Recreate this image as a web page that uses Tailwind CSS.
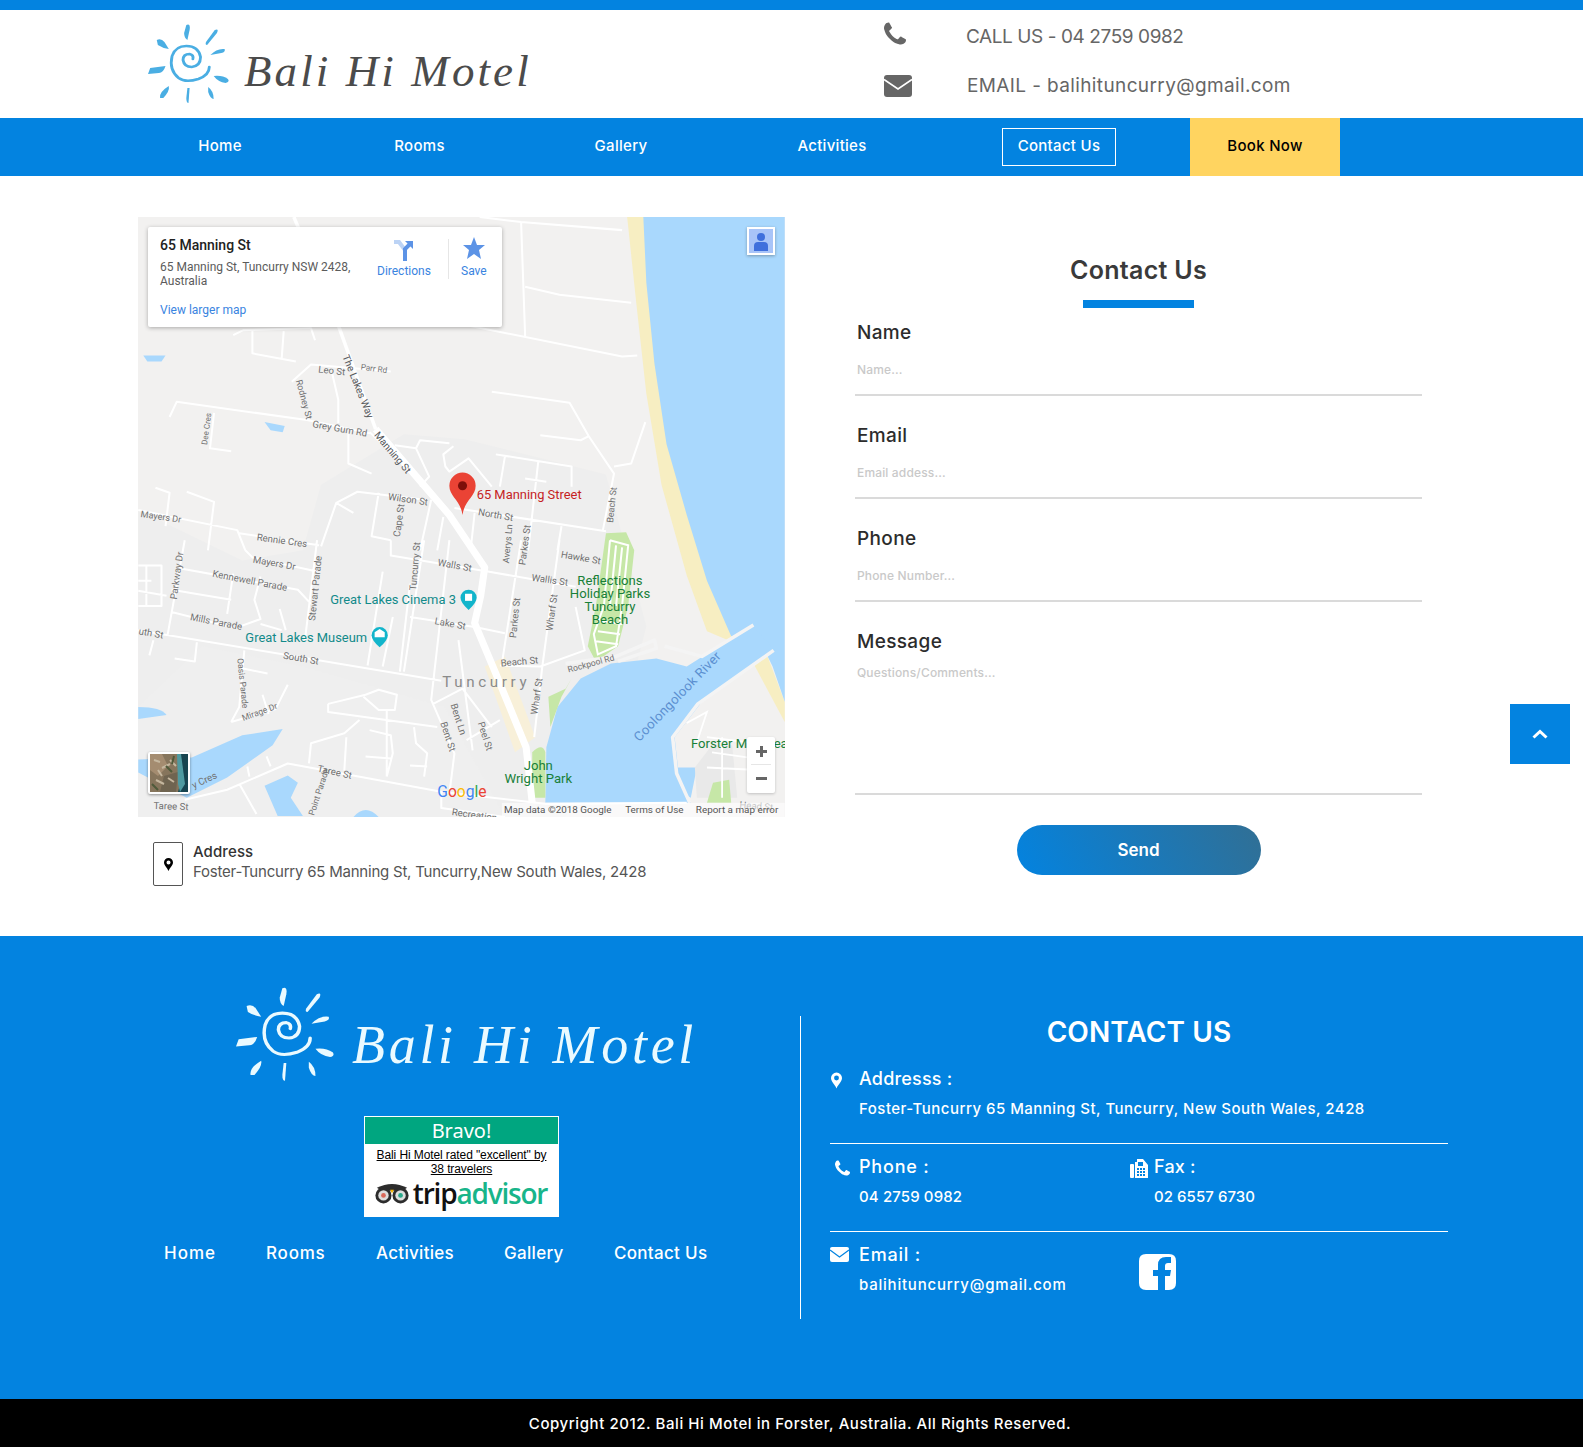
<!DOCTYPE html>
<html lang="en">
<head>
  <meta charset="UTF-8">
  <meta name="viewport" content="width=device-width, initial-scale=1.0">
  <title>Contact Us - Bali Hi Motel</title>
  <script src="https://cdn.jsdelivr.net/npm/@tailwindcss/browser@4"></script>
</head>
<body class="font-['Inter',sans-serif] bg-white text-[#333]">
<div class="relative w-[1583px] h-[1447px] overflow-hidden">

  <!-- top strip + header -->
  <div class="h-[10px] bg-[#0383e0]"></div>
  <header class="flex h-[108px]">
    <div class="w-[884px] pl-[148px] pt-[14px] flex">
      <svg width="81" height="80" viewBox="0 0 74 80" preserveAspectRatio="none" fill="#4aaee3">
        <path d="M35 1 q4 -2 3 5 l-2 10 q-3 -2 -3 -7 z"/>
        <path d="M61 6 q4 -2 2 3 l-9 12 q-2 0 -1 -3 z"/>
        <path d="M8 16 q4 -2 7 2 l4 7 q-6 -1 -10 -4 z"/>
        <path d="M57 31 q6 -7 13 -6 q1 3 -3 4 z"/>
        <path d="M0 50 l2 -6 l14 -2 q-2 7 -6 7 z"/>
        <path d="M60 52 q8 -1 13 3 q2 3 -2 4 q-7 -1 -11 -7 z"/>
        <path d="M11 74 q-1 -6 8 -12 q1 5 -5 12 z"/>
        <path d="M36 64 l2 0 l-1 15 q-2 0 -2 -5 z"/>
        <path d="M55 63 q5 4 5 12 q-3 0 -5 -7 z"/>
        <path d="M56 43 q0 8 -10 12 q-12 4 -18 -1 q-9 -8 -6 -22 q3 -10 13 -10 q11 0 13 11 q0 9 -8 10 q-7 0 -8 -7 q0 -6 6 -6 q4 1 3 5" fill="none" stroke="#4aaee3" stroke-width="2.6" stroke-linecap="round"/>
      </svg>
      <span class="font-['Liberation_Serif',serif] italic text-[45px] leading-none text-[#4b4b4b] tracking-[3.1px] ml-[15px] mt-[25px]">Bali Hi Motel</span>
    </div>
    <div class="pt-px text-[#666] text-[19px]">
      <div class="flex items-center h-[50px]">
        <div class="w-[82px] -mt-[6px]">
          <svg width="22" height="23" viewBox="0 0 1408 1408" fill="#666"><path d="M1408 1112q0 27-10 70.5t-21 68.5q-21 50-122 106-94 51-186 51-27 0-53-3.5t-57.5-12.5-47-14.5-55.5-20.5-49-18q-98-35-175-83-127-79-264-216t-216-264q-48-77-83-175-3-9-18-49t-20.5-55.5-14.5-47-12.5-57.5-3.5-53q0-92 51-186 56-101 106-122 25-11 68.5-21t70.5-10q14 0 21 3 18 6 53 76 11 19 30 54t35 63.5 31 53.5q3 4 17.5 25t21.5 35.5 7 28.5q0 20-28.5 50t-62 55-62 53-28.5 46q0 9 5 22.5t8.5 20.5 14 24 11.5 19q76 137 174 235t235 174q2 1 19 11.5t24 14 20.5 8.5 22.5 5q18 0 46-28.5t53-62 55-62 50-28.5q14 0 28.5 7t35.5 21.5 25 17.5q25 15 53.5 31t63.5 35 54 30q70 35 76 53 3 7 3 21z"/></svg>
        </div>
        <span class="mt-[3px] tracking-[-0.42px]">CALL US - 04 2759 0982</span>
      </div>
      <div class="flex items-center h-[50px]">
        <div class="w-[83px]">
          <svg width="28" height="22" viewBox="0 0 28 22"><rect width="28" height="22" rx="3" fill="#666"/><path d="M0 4.5 L14 14 L28 4.5" fill="none" stroke="#fff" stroke-width="1.6"/></svg>
        </div>
        <span class="tracking-[0.38px]">EMAIL - balihituncurry@gmail.com</span>
      </div>
    </div>
  </header>

  <!-- nav -->
  <nav class="h-[58px] bg-[#0383e0] pl-[120px] flex items-center text-white text-[15px] font-medium tracking-[0.3px]">
    <a class="w-[200px] text-center -mt-[2px]">Home</a>
    <a class="w-[199px] text-center -mt-[2px]">Rooms</a>
    <a class="w-[204px] text-center -mt-[2px]">Gallery</a>
    <a class="w-[218px] text-center -mt-[2px]">Activities</a>
    <div class="w-[236px] flex justify-center -mt-[1px]">
      <a class="w-[114px] h-[38px] border border-white flex items-center justify-center">Contact Us</a>
    </div>
    <a class="ml-[13px] w-[150px] h-[58px] bg-[#ffd460] text-black flex items-center justify-center pb-[1px]">Book Now</a>
  </nav>

  <!-- main -->
  <main class="h-[760px] flex">
    <div class="pl-[138px] pt-[41px] w-[855px]">
      <div class="relative w-[647px] h-[600px] overflow-hidden bg-[#f2f1f0]">
        <svg class="font-['Roboto',sans-serif]" width="647" height="600" viewBox="137 215 640 594">
          <!-- land tone -->
          <path d="M137 505 L240 555 L300 545 L318 480 L400 430 L460 435 L600 470 L640 620 L620 700 L560 809 L137 809 Z" fill="#eeeeee"/>
          <path d="M137 700 L200 640 L300 660 L440 700 L500 809 L137 809 Z" fill="#efefef"/>
          <!-- sand -->
          <path d="M621 215 L640 215 L648 330 L664 440 L690 540 L735 640 L700 625 L680 570 L655 480 L640 390 L630 300 Z" fill="#f7eec2"/>
          <path d="M745 655 L760 650 L777 695 L777 715 Z" fill="#f7eec2"/>
          <!-- water -->
          <path d="M637 215 L777 215 L777 695 L765 660 L748 625 L724 630 L700 575 L680 510 L660 440 L648 360 L640 280 Z" fill="#a9d8fd"/>
          <path d="M540 795 L541 740 L552 700 L575 672 L605 657 L650 652 L680 660 L745 619 L767 644 L695 695 L668 730 L672 766 L684 795 Z" fill="#a9d8fd"/>
          <path d="M670 760 L690 760 L684 790 L675 785 Z" fill="#a9d8fd"/>
          <path d="M142 352 L164 352 L160 358 L146 358 Z" fill="#a9d8fd"/>
          <path d="M262 418 L282 422 L280 428 L268 426 Z" fill="#a9d8fd"/>
          <path d="M137 700 Q160 700 165 708 L137 712 Z" fill="#a9d8fd"/>
          <path d="M137 752 L190 750 L240 728 L280 722 L270 738 L225 770 L185 790 L137 765 Z" fill="#a9d8fd"/>
          <path d="M262 778 L285 768 L295 775 L288 790 L300 808 L275 808 Z" fill="#a9d8fd"/>
          <path d="M350 809 Q362 795 375 809 Z" fill="#a9d8fd"/>
          <!-- parks -->
          <path d="M600 528 L620 527 L628 545 L622 600 L612 640 L590 655 L582 640 L590 600 Z" fill="#c6e7a7"/>
          <path d="M543 690 L560 682 L566 672 L556 690 L545 720 Z" fill="#c6e7a7"/>
          <path d="M527 745 Q537 735 540 745 L540 790 L527 790 Z" fill="#c6e7a7"/>
          <path d="M688 760 L705 738 L725 738 L730 790 L690 790 Z" fill="#e9e9e9"/>
          <path d="M706 775 L722 772 L724 795 L700 795 Z" fill="#c6e7a7"/>
          <path d="M480 660 L510 745 L530 730 L500 650 Z" fill="#f8f0d9"/>
          <!-- minor roads -->
          <path fill="none" stroke="#fff" stroke-width="2" stroke-linejoin="round"
            d="M475 215 L516 220 L616 228 M516 220 L520 333 M520 284 L554 292 L625 300 M466 323 L616 353 L631 352
            M487 388 L564 399 L583 432 L608 469 L597 525 M535 431 L575 436 L583 432 M608 462 L625 459 L639 418
            M168 413 L175 398 L304 416 L366 429 M289 378 L308 361 L387 368 M329 370 L335 396 L335 419
            M250 327 L250 350 L293 358 M281 328 L279 355 M231 332 L241 327 L308 325 L312 337
            M212 409 L208 444 L229 447 M345 429 L345 459 L368 469 M366 428 L412 469
            M391 441 L412 444 L425 472 L416 482 M412 444 L416 436 L445 439 M449 442 L439 450 L441 462 L445 467 L464 454 L487 482
            M491 450 L566 462 L566 482 M500 452 L495 482 M533 457 L523 545 M520 474 L541 477
            M318 541 L333 498 L354 487 L420 495 M333 498 L350 508 M375 488 L368 531 L387 535 M427 495 L416 545
            M450 503 L600 526 M439 512 L433 545 M470 508 L466 545 M556 521 L552 545
            M137 505 L235 525 L243 545 M154 483 L168 488 L164 521 M185 487 L212 497 L206 545 M237 528 L316 540
            M243 545 L250 552 L314 566 M314 535 L302 634 M179 563 L295 584 L308 598 M183 535 L166 629
            M387 535 L387 550 L483 566 L570 581 M170 584 L229 594 M231 568 L225 608
            M170 606 L233 622 L258 613 L252 594 L258 571 M258 618 L279 624 M277 603 L283 624
            M137 624 L437 674 M195 636 L193 655 L173 652 M152 634 L148 649 M242 644 L237 700 L229 715 M241 662 L265 667
            M229 715 L273 702 L285 678 M260 688 L266 707 M379 566 L364 659 M389 611 L379 660 M406 578 L396 665
            M420 535 L400 665 M445 535 L427 693 L450 746 L445 786 M406 611 L470 621 M475 622 L500 627
            M429 697 L458 682 L487 720 M495 659 L535 660 L579 644 L570 601 M516 535 L497 657 M554 535 L537 660 L529 730
            M183 792 L225 782 L285 756 L437 784 L540 796 L680 795 M245 759 L247 769 M264 749 L268 759 M237 776 L254 806
            M306 756 L308 736 L341 726 L356 713 M343 730 L341 763 M325 697 L362 688 L375 683 L393 688 L391 703 L375 703 L360 690
            M325 697 L325 705 L433 720 M383 703 L383 769 M366 723 L387 728 L389 746 L383 769 M362 749 L387 751
            M410 720 L412 736 L423 746 L420 769 M406 758 L423 759 M454 634 L468 743 M462 733 L495 713 M437 784 L437 800 L500 809
            M137 560 L160 560 L160 600 L137 600 M150 575 L137 575 M145 560 L145 600 M137 585 L165 590"/>
          <!-- breakwaters and forster streets -->
          <path fill="none" stroke="#f4f4f4" stroke-width="3.5" stroke-linejoin="round" d="M560 657 L610 650 L648 634 L650 642 L612 655 M658 640 L695 650 L746 619 M766 644 L691 697 L666 730 L670 766 L683 795"/>
          <path fill="none" stroke="#fff" stroke-width="1.8" d="M680 716 L700 705 L690 735 M700 730 L740 735 M705 745 L740 750 M700 760 L740 762 M715 730 L715 790"/>
          <!-- caravan park stripes -->
          <path fill="none" stroke="#fff" stroke-width="2" d="M604 535 L622 540 L616 600 L610 640 L592 648 L588 628 L598 600 L604 535 M610 540 L604 600 M616 542 L610 600 M592 625 L614 628 M590 635 L612 638 M594 615 L616 618"/>
          <!-- main road -->
          <path fill="none" stroke="#fff" stroke-width="3.5" d="M291 215 L306 250 M335 322 L372 425"/>
          <path fill="none" stroke="#fff" stroke-width="7" stroke-linejoin="round" d="M372 425 L445 510 L480 562 L476 590 L470 617 L491 667 L521 740 L527 795"/>

          <!-- labels -->
          <g fill="#707070" font-size="9.5">
            <text x="315" y="369" transform="rotate(6 315 369)">Leo St</text>
            <text x="357" y="366" font-size="8" transform="rotate(8 357 366)">Parr Rd</text>
            <text x="293" y="377" font-size="9" transform="rotate(75 293 377)">Rodney St</text>
            <text x="205" y="441" font-size="8" transform="rotate(-82 205 441)">Dee Cres</text>
            <text x="309" y="423" transform="rotate(10 309 423)">Grey Gum Rd</text>
            <text x="384" y="495" transform="rotate(8 384 495)">Wilson St</text>
            <text x="473" y="510" transform="rotate(10 473 510)">North St</text>
            <text x="139" y="512" font-size="9" transform="rotate(8 139 512)">Mayers Dr</text>
            <text x="254" y="535" font-size="9.5" transform="rotate(8 254 535)">Rennie Cres</text>
            <text x="250" y="557" transform="rotate(10 250 557)">Mayers Dr</text>
            <text x="210" y="571" transform="rotate(11 210 571)">Kennewell Parade</text>
            <text x="175" y="594" transform="rotate(-82 175 594)">Parkway Dr</text>
            <text x="188" y="614" transform="rotate(11 188 614)">Mills Parade</text>
            <text x="137" y="628" transform="rotate(10 137 628)">uth St</text>
            <text x="280" y="652" transform="rotate(10 280 652)">South St</text>
            <text x="312" y="615" transform="rotate(-84 312 615)">Stewart Parade</text>
            <text x="396" y="532" transform="rotate(-82 396 532)">Cape St</text>
            <text x="412" y="585" transform="rotate(-85 412 585)">Tuncurry St</text>
            <text x="433" y="560" transform="rotate(10 433 560)">Walls St</text>
            <text x="526" y="575" transform="rotate(8 526 575)">Wallis St</text>
            <text x="430" y="618" transform="rotate(10 430 618)">Lake St</text>
            <text x="504" y="558" font-size="9" transform="rotate(-85 504 558)">Averys Ln</text>
            <text x="520" y="560" transform="rotate(-82 520 560)">Parkes St</text>
            <text x="555" y="552" transform="rotate(10 555 552)">Hawke St</text>
            <text x="511" y="632" transform="rotate(-84 511 632)">Parkes St</text>
            <text x="547" y="625" transform="rotate(-82 547 625)">Wharf St</text>
            <text x="496" y="660" transform="rotate(-5 496 660)">Beach St</text>
            <text x="563" y="666" font-size="8.5" transform="rotate(-15 563 666)">Rockpool Rd</text>
            <text x="607" y="518" font-size="9" transform="rotate(-84 607 518)">Beach St</text>
            <text x="532" y="708" transform="rotate(-82 532 708)">Wharf St</text>
            <text x="235" y="652" font-size="8.5" transform="rotate(84 235 652)">Oasis Parade</text>
            <text x="241" y="714" font-size="8.5" transform="rotate(-20 241 714)">Mirage Dr</text>
            <text x="446" y="698" transform="rotate(72 446 698)">Bent Ln</text>
            <text x="436" y="716" transform="rotate(72 436 716)">Bent St</text>
            <text x="473" y="716" transform="rotate(72 473 716)">Peel St</text>
            <text x="314" y="764" transform="rotate(12 314 764)">Taree St</text>
            <text x="152" y="801" transform="rotate(2 152 801)">Taree St</text>
            <text x="192" y="781" transform="rotate(-25 192 781)">y Cres</text>
            <text x="311" y="808" font-size="8.5" transform="rotate(-72 311 808)">Point Parade</text>
            <text x="447" y="807" transform="rotate(8 447 807)">Recreation</text>
            <text x="732" y="800" transform="rotate(5 732 800)">Head St</text>
          </g>
          <g fill="#55585c" font-size="10">
            <text x="339" y="353" transform="rotate(68 339 353)">The Lakes Way</text>
            <text x="370" y="431" transform="rotate(50 370 431)">Manning St</text>
          </g>
          <text x="438" y="680" font-size="15" fill="#8a8a8a" letter-spacing="3.6">Tuncurry</text>
          <text x="472" y="494" font-size="12.800" fill="#c5221f">65 Manning Street</text>
          <g fill="#128a8a" font-size="12.800">
            <text x="327" y="598">Great Lakes Cinema 3</text>
            <text x="243" y="636">Great Lakes Museum</text>
          </g>
          <path d="M464 604 q-8 -7 -8 -12 a8 8 0 1 1 16 0 q0 5 -8 12 z" fill="#12b5cb"/>
          <rect x="460.500" y="588" width="7" height="7" fill="#fff"/>
          <path d="M376 641 q-8 -7 -8 -12 a8 8 0 1 1 16 0 q0 5 -8 12 z" fill="#12b5cb"/>
          <path d="M371 631 L371 626 L376 623 L381 626 L381 631 Z" fill="#fff"/>
          <g fill="#188038" font-size="13" text-anchor="middle">
            <text x="604" y="579">Reflections</text>
            <text x="604" y="592">Holiday Parks</text>
            <text x="604" y="605">Tuncurry</text>
            <text x="604" y="618">Beach</text>
            <text x="533" y="762">John</text>
            <text x="533" y="775">Wright Park</text>
            <text x="712" y="741">Forster M</text>
            <text x="773" y="741">ea</text>
          </g>
          <text x="633" y="735" font-size="13" fill="#5b8fd0" transform="rotate(-46 633 735)" letter-spacing="0.3">Coolongolook River</text>
          <!-- marker -->
          <path d="M458 510 C456 495 445 492 445 481 A12.500 12.500 0 0 1 471 481 C471 492 460 495 458 510 Z" fill="#ea4335"/>
          <circle cx="458" cy="481" r="4.500" fill="#7d0f0a"/>
          <!-- google -->
          <text x="433" y="789" font-size="15.500">
            <tspan fill="#4285f4">G</tspan><tspan fill="#ea4335">o</tspan><tspan fill="#fbbc05">o</tspan><tspan fill="#4285f4">g</tspan><tspan fill="#34a853">l</tspan><tspan fill="#ea4335">e</tspan>
          </text>
          <!-- attribution -->
          <rect x="497" y="795" width="280" height="14" fill="#fff" fill-opacity="0.6"/>
          <g fill="#555" font-size="9.800">
            <text x="499" y="805">Map data ©2018 Google</text>
            <text x="619" y="805">Terms of Use</text>
            <text x="689" y="805">Report a map error</text>
          </g>
        </svg>

        <!-- info card -->
        <div class="absolute left-[10px] top-[10px] w-[354px] h-[100px] bg-white rounded-[2px] shadow-[0_1px_4px_rgba(0,0,0,0.3)] font-['Roboto',sans-serif]">
          <div class="absolute left-[12px] top-[8px] text-[14px] leading-[20px] font-medium text-[#222]">65 Manning St</div>
          <div class="absolute left-[12px] top-[33px] w-[200px] text-[12px] leading-[14px] text-[#5b5b5b]">65 Manning St, Tuncurry NSW 2428, Australia</div>
          <div class="absolute left-[12px] top-[76px] text-[12px] leading-[14px] text-[#3a84df]">View larger map</div>
          <svg class="absolute left-[245px] top-[13px]" width="20" height="22" viewBox="0 0 20 22"><path d="M1 2 L6 2 L12 10" fill="none" stroke="#bcd3f5" stroke-width="4"/><path d="M12 21 L12 9 L17 4" fill="none" stroke="#5c93e6" stroke-width="4"/><path d="M12 1 L20 1 L20 9 Z" fill="#5c93e6"/></svg>
          <div class="absolute left-[229px] top-[37px] text-[12px] leading-[14px] text-[#3a84df]">Directions</div>
          <div class="absolute left-[300px] top-[12px] h-[40px] border-l border-[#e6e6e6]"></div>
          <svg class="absolute left-[315px] top-[10px]" width="22" height="22" viewBox="0 0 22 22"><path d="M11 0 L14 8 L22 8 L16 13 L18 22 L11 17 L4 22 L6 13 L0 8 L8 8 Z" fill="#5c93e6"/></svg>
          <div class="absolute left-[313px] top-[37px] text-[12px] leading-[14px] text-[#3a84df]">Save</div>
        </div>

        <!-- pegman -->
        <div class="absolute left-[609px] top-[10px] w-[28px] h-[28px] bg-[#a8c4f8] border-2 border-white shadow-[0_1px_3px_rgba(0,0,0,0.3)]">
          <svg width="24" height="24" viewBox="0 0 24 24" fill="#3f6fdc"><circle cx="12" cy="8" r="4"/><path d="M5 22 V17 Q5 13 9 13 H15 Q19 13 19 17 V22 Z"/></svg>
        </div>
        <!-- satellite thumbnail -->
        <div class="absolute left-[10px] top-[535px] w-[42px] h-[42px] border-2 border-white rounded-[2px] shadow-[0_1px_3px_rgba(0,0,0,0.4)] overflow-hidden bg-[#7e6d55]">
          <svg width="38" height="38" viewBox="0 0 38 38"><rect width="38" height="38" fill="#86755c"/><path d="M0 0 H12 L18 12 L8 22 L0 16 Z" fill="#a48c70"/><path d="M14 22 L28 18 L26 38 L10 38 Z" fill="#6f6450"/><path d="M4 6 L10 8 M12 14 L20 10 M6 26 L14 30 M18 24 L24 28 M20 6 L26 12 M8 16 L12 22" stroke="#c5b79f" stroke-width="2"/><path d="M2 30 L8 36 M16 12 L22 18 M24 2 L22 10" stroke="#4f5a3a" stroke-width="2"/><path d="M30 0 H38 V38 H28 L33 20 Z" fill="#17444f"/><path d="M27 0 L31 0 L35 30 L30 38 L28 30 Z" fill="#4f9aa0"/></svg>
        </div>
        <!-- zoom control -->
        <div class="absolute left-[609px] top-[520px] w-[28px] h-[56px] bg-white rounded-[2px] shadow-[0_1px_3px_rgba(0,0,0,0.2)] flex flex-col items-center text-[#666]">
          <svg class="mt-[9px]" width="11" height="11" viewBox="0 0 11 11" fill="#666"><rect x="4" width="3" height="11"/><rect y="4" width="11" height="3"/></svg>
          <div class="w-[20px] border-t border-[#e6e6e6] mt-[7px]"></div>
          <svg class="mt-[12px]" width="11" height="3" viewBox="0 0 11 3" fill="#666"><rect width="11" height="3"/></svg>
        </div>
      </div>

      <div class="flex mt-[25px] ml-[15px]">
        <div class="w-[30px] h-[44px] border border-[#555] rounded-[2px] flex items-center justify-center">
          <svg width="9" height="13" viewBox="0 0 9 13"><path fill-rule="evenodd" d="M4.500 13 C3 9.500 0 7.500 0 4.500 A4.500 4.500 0 0 1 9 4.500 C9 7.500 6 9.500 4.500 13 Z M4.500 2.500 A2 2 0 1 0 4.500 6.500 A2 2 0 1 0 4.500 2.500 Z" fill="#000"/></svg>
        </div>
        <div class="ml-[10px] text-[15px] leading-[20px]">
          <div class="font-medium text-[#333] tracking-[0.1px]">Address</div>
          <div class="text-[#555] tracking-[-0.22px]">Foster-Tuncurry 65 Manning St, Tuncurry,New South Wales, 2428</div>
        </div>
      </div>
    </div>

    <form class="w-[567px] pt-[79px]">
      <h2 class="text-center text-[25px] leading-[30px] font-semibold text-[#3a3a3a] tracking-[0.3px]">Contact Us</h2>
      <div class="w-[111px] h-[8px] bg-[#0383e0] mx-auto mt-[15px]"></div>
      <label class="block mt-[14px] ml-[2px] text-[19px] leading-[22px] font-medium tracking-[0.35px] text-[#2c2c2c]">Name</label>
      <input class="block w-full h-[52px] px-[2px] border-b-2 border-[#dadada] text-[12px] font-medium tracking-[0.15px] outline-none placeholder:text-[#c9c9c9]" placeholder="Name...">
      <label class="block mt-[29px] ml-[2px] text-[19px] leading-[22px] font-medium tracking-[0.35px] text-[#2c2c2c]">Email</label>
      <input class="block w-full h-[52px] px-[2px] border-b-2 border-[#dadada] text-[12px] font-medium tracking-[0.15px] outline-none placeholder:text-[#c9c9c9]" placeholder="Email addess...">
      <label class="block mt-[29px] ml-[2px] text-[19px] leading-[22px] font-medium tracking-[0.35px] text-[#2c2c2c]">Phone</label>
      <input class="block w-full h-[52px] px-[2px] border-b-2 border-[#dadada] text-[12px] font-medium tracking-[0.15px] outline-none placeholder:text-[#c9c9c9]" placeholder="Phone Number...">
      <label class="block mt-[29px] ml-[2px] text-[19px] leading-[22px] font-medium tracking-[0.35px] text-[#2c2c2c]">Message</label>
      <textarea class="block w-full h-[142px] px-[2px] pt-[11px] border-b-2 border-[#dadada] text-[12px] font-medium tracking-[0.15px] outline-none resize-none placeholder:text-[#c9c9c9]" placeholder="Questions/Comments..."></textarea>
      <button type="button" class="block w-[244px] h-[50px] mx-auto mt-[30px] pt-[1px] rounded-full bg-linear-[60deg] from-[#0383e0] to-[#316f94] text-white text-[17px] font-semibold">Send</button>
    </form>
  </main>

  <!-- footer -->
  <footer class="h-[463px] bg-[#0383e0] text-white flex">
    <div class="w-[800px]">
      <div class="flex mt-[51px] ml-[236px] h-[95px]">
        <svg width="98" height="95" viewBox="0 0 74 80" preserveAspectRatio="none" fill="#eafaff">
          <path d="M35 1 q4 -2 3 5 l-2 10 q-3 -2 -3 -7 z"/>
          <path d="M61 6 q4 -2 2 3 l-9 12 q-2 0 -1 -3 z"/>
          <path d="M8 16 q4 -2 7 2 l4 7 q-6 -1 -10 -4 z"/>
          <path d="M57 31 q6 -7 13 -6 q1 3 -3 4 z"/>
          <path d="M0 50 l2 -6 l14 -2 q-2 7 -6 7 z"/>
          <path d="M60 52 q8 -1 13 3 q2 3 -2 4 q-7 -1 -11 -7 z"/>
          <path d="M11 74 q-1 -6 8 -12 q1 5 -5 12 z"/>
          <path d="M36 64 l2 0 l-1 15 q-2 0 -2 -5 z"/>
          <path d="M55 63 q5 4 5 12 q-3 0 -5 -7 z"/>
          <path d="M56 43 q0 8 -10 12 q-12 4 -18 -1 q-9 -8 -6 -22 q3 -10 13 -10 q11 0 13 11 q0 9 -8 10 q-7 0 -8 -7 q0 -6 6 -6 q4 1 3 5" fill="none" stroke="#eafaff" stroke-width="2.6" stroke-linecap="round"/>
        </svg>
        <span class="font-['Liberation_Serif',serif] italic text-[54px] leading-none text-[#eafaff] tracking-[3.7px] ml-[18px] mt-[31px]">Bali Hi Motel</span>
      </div>
      <div class="ml-[364px] mt-[34px] w-[195px] h-[101px] bg-white border border-white font-['Liberation_Sans',sans-serif] text-center">
        <div class="h-[27px] bg-[#00a680] text-[20px] leading-[27px] text-white font-['Noto_Sans',sans-serif]">Bravo!</div>
        <div class="mt-[4px] text-[12px] leading-[14px] text-black underline tracking-[-0.1px] px-[10px]">Bali Hi Motel rated "excellent" by 38 travelers</div>
        <div class="flex items-center justify-center h-[34px] pr-[2px]">
          <svg width="36" height="21" viewBox="0 0 38 22"><path d="M3 5 Q19 -3 35 5 L30 8 H8 Z" fill="#2c2c2c"/><path d="M17 7 L21 7 L19 11 Z" fill="#f2b203"/><circle cx="10" cy="13" r="8.500" fill="#2c2c2c"/><circle cx="28" cy="13" r="8.500" fill="#2c2c2c"/><circle cx="10" cy="13" r="5.500" fill="#ddd"/><circle cx="28" cy="13" r="5.500" fill="#ddd"/><circle cx="10" cy="13" r="2.500" fill="#d9685a"/><circle cx="28" cy="13" r="2.500" fill="#2aa98b"/></svg>
          <span class="text-[28px] leading-none font-['Open_Sans',sans-serif] font-semibold tracking-[-1.2px] text-[#111] ml-[3px]">trip<span class="text-[#18b58a]">advisor</span></span>
        </div>
      </div>
      <div class="flex ml-[164px] mt-[24px] text-[17px] leading-[24px] font-medium">
        <a class="w-[102px] tracking-[1px]">Home</a>
        <a class="w-[110px] tracking-[0.8px]">Rooms</a>
        <a class="w-[128px] tracking-[0.3px]">Activities</a>
        <a class="w-[110px] tracking-[0.3px]">Gallery</a>
        <a class="tracking-[0.3px]">Contact Us</a>
      </div>
    </div>

    <div class="mt-[80px] h-[303px] border-l border-white pl-[29px] w-[648px]">
      <h3 class="-mt-[1px] text-center text-[28px] leading-[34px] font-semibold tracking-[0.1px]">CONTACT US</h3>
      <div class="mt-[6px] h-[89px] pt-[13px] border-b border-white flex">
        <svg class="mt-[4px] ml-px" width="11" height="17" viewBox="0 0 9 13"><path fill-rule="evenodd" d="M4.500 13 C3 9.500 0 7.500 0 4.500 A4.500 4.500 0 0 1 9 4.500 C9 7.500 6 9.500 4.500 13 Z M4.500 2.500 A2 2 0 1 0 4.500 6.500 A2 2 0 1 0 4.500 2.500 Z" fill="#fff"/></svg>
        <div class="ml-[17px]">
          <div class="text-[18px] leading-[22px] font-medium tracking-[0.2px]">Addresss :</div>
          <div class="mt-[8px] text-[15px] leading-[22px] font-medium tracking-[0.48px]">Foster-Tuncurry 65 Manning St, Tuncurry, New South Wales, 2428</div>
        </div>
      </div>
      <div class="h-[88px] pt-[12px] border-b border-white flex">
        <div class="w-[300px] flex">
          <svg class="ml-[5px] mt-[4px]" width="15" height="16" viewBox="0 0 1408 1408" fill="#fff"><path d="M1408 1112q0 27-10 70.5t-21 68.5q-21 50-122 106-94 51-186 51-27 0-53-3.500t-57.500-12.500-47-14.500-55.500-20.500-49-18q-98-35-175-83-127-79-264-216t-216-264q-48-77-83-175-3-9-18-49t-20.500-55.500-14.500-47-12.500-57.500-3.500-53q0-92 51-186 56-101 106-122 25-11 68.500-21t70.500-10q14 0 21 3 18 6 53 76 11 19 30 54t35 63.500 31 53.500q3 4 17.500 25t21.500 35.500 7 28.500q0 20-28.500 50t-62 55-62 53-28.500 46q0 9 5 22.500t8.500 20.500 14 24 11.500 19q76 137 174 235t235 174q2 1 19 11.500t24 14 20.500 8.500 22.500 5q18 0 46-28.500t53-62 55-62 50-28.500q14 0 28.500 7t35.500 21.500 25 17.500q25 15 53.500 31t63.500 35 54 30q70 35 76 53 3 7 3 21z"/></svg>
          <div class="ml-[9px]">
            <div class="text-[18px] leading-[22px] font-medium tracking-[0.8px]">Phone :</div>
            <div class="mt-[8px] text-[15px] leading-[22px] font-medium tracking-[0.12px]">04 2759 0982</div>
          </div>
        </div>
        <div class="flex">
          <svg class="mt-[3px]" width="18" height="19" viewBox="0 0 18 19" fill="#fff"><rect y="5" width="4" height="14" rx="1"/><path d="M5 3 V19 H18 V6 L13 0 H7 V3 Z"/><g fill="#0383e0"><rect x="8" y="3" width="5" height="4"/><rect x="7" y="9" width="2" height="2"/><rect x="10" y="9" width="2" height="2"/><rect x="13" y="9" width="2" height="2"/><rect x="7" y="12" width="2" height="2"/><rect x="10" y="12" width="2" height="2"/><rect x="13" y="12" width="2" height="2"/><rect x="7" y="15" width="2" height="2"/><rect x="10" y="15" width="2" height="2"/><rect x="13" y="15" width="2" height="2"/></g></svg>
          <div class="ml-[6px]">
            <div class="text-[18px] leading-[22px] font-medium tracking-[0.2px]">Fax :</div>
            <div class="mt-[8px] text-[15px] leading-[22px] font-medium tracking-[0.05px]">02 6557 6730</div>
          </div>
        </div>
      </div>
      <div class="pt-[12px] flex">
        <div class="w-[309px] flex">
          <svg class="mt-[3px]" width="19" height="15" viewBox="0 0 19 15"><rect width="19" height="15" rx="2" fill="#fff"/><path d="M0 3 L9.500 10 L19 3" fill="none" stroke="#0383e0" stroke-width="1.2"/></svg>
          <div class="ml-[10px]">
            <div class="text-[18px] leading-[22px] font-medium tracking-[0.8px]">Email :</div>
            <div class="mt-[8px] text-[15px] leading-[22px] font-medium tracking-[0.78px]">balihituncurry@gmail.com</div>
          </div>
        </div>
        <svg class="mt-[10px]" width="37" height="36" viewBox="0 0 37 36"><path d="M7 0 H30 Q37 0 37 7 V29 Q37 36 30 36 H26 V22 H31 L32 16 H26 V12 Q26 9 29 9 H32 V3 H27 Q19 3 19 11 V16 H14 V22 H19 V36 H7 Q0 36 0 29 V7 Q0 0 7 0 Z" fill="#fff"/></svg>
      </div>
    </div>
  </footer>
  <div class="h-[48px] bg-black text-white flex items-center justify-center pl-[17px] pt-[2px] text-[15px] font-medium tracking-[0.57px]">Copyright 2012. Bali Hi Motel in Forster, Australia. All Rights Reserved.</div>

  <!-- back to top -->
  <a class="absolute left-[1510px] top-[704px] w-[60px] h-[60px] bg-[#0383e0] flex items-center justify-center">
    <svg width="16" height="10" viewBox="0 0 16 10"><path d="M1.500 8.500 L8 2.500 L14.500 8.500" fill="none" stroke="#fff" stroke-width="3"/></svg>
  </a>
</div>
</body>
</html>
